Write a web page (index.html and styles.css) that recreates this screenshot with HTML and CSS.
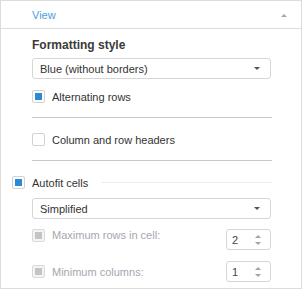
FILE: index.html
```html
<!DOCTYPE html>
<html lang="en">
<head>
    <meta charset="UTF-8">
    <title>View settings</title>
    <link rel="stylesheet" href="styles.css">
</head>
<body>
    <div class="panel">
        <div class="panel-header">
            <span class="panel-title">View</span>
            <span class="collapse-arrow"></span>
        </div>
        <div class="panel-body">
            <div class="section-title">Formatting style</div>
            <div class="select style-select">
                <span>Blue (without borders)</span>
                <span class="select-arrow"></span>
            </div>
            <div class="check-row alt-rows">
                <span class="checkbox checked"></span>
                <span>Alternating rows</span>
            </div>
            <div class="divider first"></div>
            <div class="check-row headers-row">
                <span class="checkbox"></span>
                <span>Column and row headers</span>
            </div>
            <div class="divider second"></div>
            <div class="check-row autofit-row">
                <span class="checkbox checked"></span>
                <span>Autofit cells</span>
                <span class="group-line"></span>
            </div>
            <div class="select autofit-select">
                <span>Simplified</span>
                <span class="select-arrow"></span>
            </div>
            <div class="spin-row max-rows">
                <span class="checkbox disabled"></span>
                <span class="spin-label">Maximum rows in cell:</span>
                <div class="spinner">
                    <span>2</span>
                    <span class="spin-arrows"><i class="up"></i><i class="down"></i></span>
                </div>
            </div>
            <div class="spin-row min-cols">
                <span class="checkbox disabled"></span>
                <span class="spin-label">Minimum columns:</span>
                <div class="spinner">
                    <span>1</span>
                    <span class="spin-arrows"><i class="up"></i><i class="down"></i></span>
                </div>
            </div>
        </div>
    </div>
</body>
</html>
```

FILE: styles.css
```css
body {
    margin: 0;
    background: #fff;
    font-family: "Liberation Sans", Arial, sans-serif;
    font-size: 11px;
    color: #333;
}
.panel {
    width: 302px;
    height: 289px;
    box-sizing: border-box;
    border: 1px solid #dcdcdc;
}
.panel-header {
    height: 28px;
    box-sizing: border-box;
    border-bottom: 1px solid #dcdcdc;
    display: flex;
    align-items: center;
    justify-content: space-between;
    padding: 1px 14px 0 31px;
}
.panel-title {
    color: #4a9ee2;
}
.collapse-arrow {
    width: 0;
    height: 0;
    border-left: 3px solid transparent;
    border-right: 3px solid transparent;
    border-bottom: 3px solid #a8a8a8;
}
.panel-body {
    padding: 0 30px 0 31px;
}
.section-title {
    margin-top: 9px;
    height: 14px;
    line-height: 14px;
    font-size: 12px;
    font-weight: bold;
    color: #3a3a3a;
}
.select {
    height: 21px;
    box-sizing: border-box;
    border: 1px solid #d6d6d6;
    border-radius: 3px;
    display: flex;
    align-items: center;
    justify-content: space-between;
    padding: 0 10px 0 7px;
}
.style-select {
    margin-top: 6px;
}
.select-arrow {
    width: 0;
    height: 0;
    border-left: 3px solid transparent;
    border-right: 3px solid transparent;
    border-top: 3px solid #555;
}
.check-row {
    height: 13px;
    display: flex;
    align-items: center;
    gap: 7px;
}
.checkbox {
    width: 13px;
    height: 13px;
    box-sizing: border-box;
    border: 1px solid #d2d2d2;
    border-radius: 2px;
    background: #fff;
    flex-shrink: 0;
    display: flex;
    align-items: center;
    justify-content: center;
}
.checkbox.checked::after,
.checkbox.disabled::after {
    content: "";
    width: 7px;
    height: 7px;
    background: #2a8ad6;
}
.checkbox.disabled {
    border-color: #dadada;
    background: #f4f4f4;
}
.checkbox.disabled::after {
    background: #c4c4c4;
}
.alt-rows {
    margin-top: 11px;
}
.divider {
    height: 1px;
    background: #c8c8c8;
    margin-right: -1px;
}
.divider.first {
    margin-top: 14px;
}
.headers-row {
    margin-top: 15px;
}
.divider.second {
    margin-top: 14px;
}
.autofit-row {
    margin-top: 15px;
    margin-left: -20px;
}
.group-line {
    flex: 1;
    height: 1px;
    background: #ededed;
    margin: 0 -1px 0 6px;
}
.autofit-select {
    margin-top: 9px;
}
.spin-row {
    display: flex;
    gap: 7px;
    color: #a6a6b0;
}
.spin-label {
    flex: 1;
}
.max-rows {
    margin-top: 10px;
    align-items: flex-start;
}
.max-rows .spin-label {
    line-height: 13px;
}
.min-cols {
    margin-top: 11px;
    align-items: center;
}
.spinner {
    width: 45px;
    height: 21px;
    box-sizing: border-box;
    border: 1px solid #d6d6d6;
    border-radius: 3px;
    display: flex;
    align-items: center;
    justify-content: space-between;
    padding: 0 9px 0 5px;
    color: #444;
}
.spin-arrows {
    display: flex;
    flex-direction: column;
    gap: 4px;
}
.spin-arrows i {
    width: 0;
    height: 0;
    border-left: 3px solid transparent;
    border-right: 3px solid transparent;
}
.spin-arrows .up {
    border-bottom: 3px solid #a4a4a4;
}
.spin-arrows .down {
    border-top: 3px solid #a4a4a4;
}
```
